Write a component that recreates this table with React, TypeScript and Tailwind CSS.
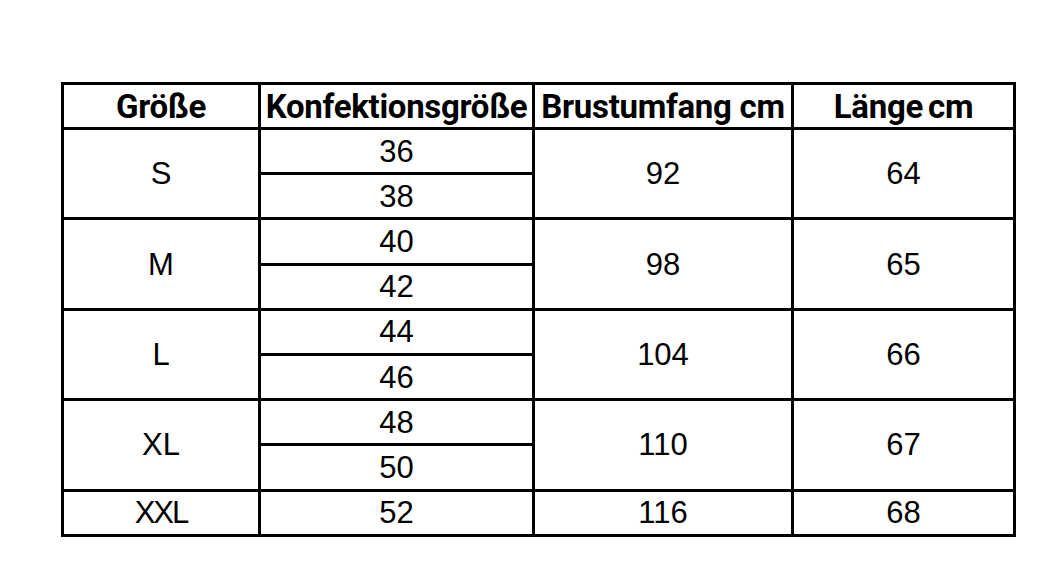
const rows = [
  { size: "S", konf: ["36", "38"], brust: "92", laenge: "64" },
  { size: "M", konf: ["40", "42"], brust: "98", laenge: "65" },
  { size: "L", konf: ["44", "46"], brust: "104", laenge: "66" },
  { size: "XL", konf: ["48", "50"], brust: "110", laenge: "67" },
];

const cell = "border-[3px] border-black text-center align-middle p-0";

export default function App() {
  return (
    <div className="w-[1060px] h-[583px] bg-white pt-[82px] pl-[61px]">
      <table
        className="border-collapse text-black text-[31px] leading-none"
        style={{ fontFamily: '"Liberation Sans", Arial, sans-serif' }}
      >
        <colgroup>
          <col className="w-[197px]" />
          <col className="w-[274px]" />
          <col className="w-[259px]" />
          <col className="w-[222px]" />
        </colgroup>
        <thead>
          <tr className="h-[45px] font-bold text-[33px] tracking-[-0.3px]" style={{ fontFamily: "Roboto, sans-serif" }}>
            <th className={cell}>Größe</th>
            <th className={cell}>Konfektionsgröße</th>
            <th className={cell}>Brustumfang cm</th>
            <th className={cell}>Länge<span className="ml-[5px]">cm</span></th>
          </tr>
        </thead>
        <tbody>
          {rows.map((r) => (
            <>
              <tr key={r.size + "a"} className="h-[45.2px]">
                <td rowSpan={2} className={cell}>{r.size}</td>
                <td className={cell}>{r.konf[0]}</td>
                <td rowSpan={2} className={cell}>{r.brust}</td>
                <td rowSpan={2} className={cell}>{r.laenge}</td>
              </tr>
              <tr key={r.size + "b"} className="h-[45.2px]">
                <td className={cell}>{r.konf[1]}</td>
              </tr>
            </>
          ))}
          <tr className="h-[45.2px]">
            <td className={cell}><span className="tracking-[-2px]">XXL</span></td>
            <td className={cell}>52</td>
            <td className={cell}>116</td>
            <td className={cell}>68</td>
          </tr>
        </tbody>
      </table>
    </div>
  );
}
